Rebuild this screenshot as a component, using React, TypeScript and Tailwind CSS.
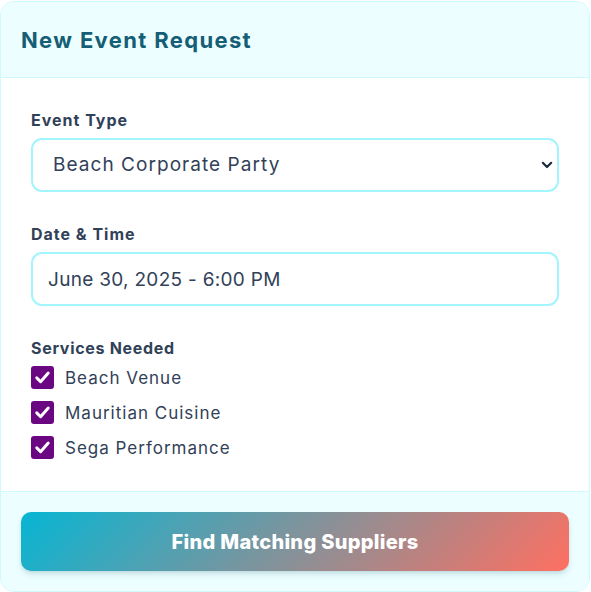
import React, { useState } from 'react';

const services = ['Beach Venue', 'Mauritian Cuisine', 'Sega Performance'];

const Check: React.FC<{ on: boolean; onClick: () => void }> = ({ on, onClick }) => (
  <button
    type="button"
    onClick={onClick}
    className={`w-[23px] h-[23px] rounded-[3px] flex items-center justify-center ${on ? 'bg-[#6b0683]' : 'bg-white border border-slate-400'}`}
  >
    {on && (
      <svg width="17" height="17" viewBox="0 0 16 16" fill="none">
        <path d="M2.6 8.4l3.6 3.6 7.2-8.2" stroke="white" strokeWidth="2.8" strokeLinecap="round" strokeLinejoin="round" />
      </svg>
    )}
  </button>
);

export default function App() {
  const [checked, setChecked] = useState<boolean[]>([true, true, true]);

  return (
    <div className="w-[591px] h-[592px] bg-white" style={{ fontFamily: 'Inter, "Open Sans", sans-serif' }}>
      <div className="w-[590px] h-[591px] mt-px border border-cyan-100 rounded-[14px] overflow-hidden flex flex-col">
        <div className="h-[76px] bg-[#ecfeff] border-b border-cyan-100 px-5 flex items-center">
          <h2 className="text-[22px] font-bold text-[#155e75] tracking-[1.35px] leading-none mt-[1px]">
            New Event Request
          </h2>
        </div>

        <div className="flex-1 px-[30px] pt-[32px] flex flex-col">
          <label className="text-[16px] leading-[20px] font-bold text-slate-700 tracking-[1px] mb-[8px]">Event Type</label>
          <div className="relative">
            <select className="appearance-none w-full h-[54px] border-2 border-cyan-200 rounded-[11px] pl-5 text-[19px] tracking-[1.05px] text-slate-700 bg-white outline-none">
              <option>Beach Corporate Party</option>
              <option>Wedding</option>
              <option>Birthday</option>
            </select>
            <svg className="absolute right-[6px] top-[21px] pointer-events-none" width="12" height="12" viewBox="0 0 12 12" fill="none">
              <path d="M1.8 3.8l4.2 4.2 4.2-4.2" stroke="#1e293b" strokeWidth="2.2" strokeLinecap="round" strokeLinejoin="round" />
            </svg>
          </div>

          <label className="text-[16px] leading-[20px] font-bold text-slate-700 tracking-[1px] mt-[32px] mb-[8px]">Date &amp; Time</label>
          <input
            defaultValue="June 30, 2025 - 6:00 PM"
            className="w-full h-[54px] border-2 border-cyan-200 rounded-[11px] pl-[15px] text-[19px] tracking-[0.3px] text-slate-700 bg-white outline-none"
          />

          <label className="text-[16px] leading-[20px] font-bold text-slate-700 tracking-[0.7px] mt-[32px] mb-[8px]">Services Needed</label>
          <div className="flex flex-col gap-[12px]">
            {services.map((s, i) => (
              <div key={s} className="flex items-center gap-[11px]">
                <Check on={checked[i]} onClick={() => setChecked(c => c.map((v, j) => (j === i ? !v : v)))} />
                <span className="text-[17px] leading-[20px] tracking-[1px] text-slate-700">{s}</span>
              </div>
            ))}
          </div>
        </div>

        <div className="h-[100px] bg-[#ecfeff] border-t border-cyan-100 px-5 pt-5">
          <button className="w-full h-[59px] rounded-[10px] text-white text-[20px] font-extrabold tracking-[0.3px] bg-[linear-gradient(135deg,#06b6d4,#ff6f61)] shadow-md shadow-cyan-900/15">
            Find Matching Suppliers
          </button>
        </div>
      </div>
    </div>
  );
}
